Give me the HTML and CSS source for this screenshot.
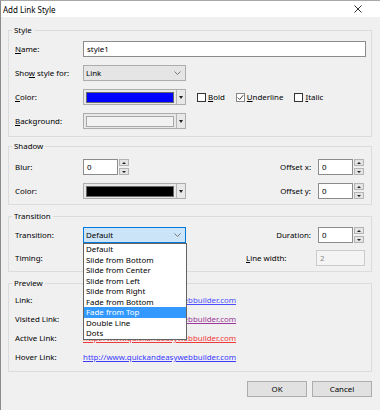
FILE: index.html
```html
<!DOCTYPE html>
<html lang="en">
<head>
    <meta charset="UTF-8">
    <meta name="viewport" content="width=device-width, initial-scale=1.0">
    <title>Add Link Style</title>
    <link rel="stylesheet" href="styles.css">
</head>
<body>

<div class="window">
    <div class="titlebar">
        <span>Add Link Style</span>
        <svg class="close" width="8" height="8" viewBox="0 0 8 8">
            <path d="M0.5 0.5 L7.5 7.5 M7.5 0.5 L0.5 7.5" stroke="#333" stroke-width="1"/>
        </svg>
    </div>

    <div class="content">

        <fieldset class="group group-style">
            <legend>Style</legend>
            <div class="row">
                <span class="lbl"><u>N</u>ame:</span>
                <div class="field name">style1</div>
            </div>
            <div class="row">
                <span class="lbl">Sho<u>w</u> style for:</span>
                <div class="select">
                    <span>Link</span>
                    <svg width="7" height="4" viewBox="0 0 7 4"><path d="M0.5 0.5 L3.5 3.5 L6.5 0.5" fill="none" stroke="#777"/></svg>
                </div>
            </div>
            <div class="row">
                <span class="lbl"><u>C</u>olor:</span>
                <div class="colorbtn">
                    <div class="swatch blue"></div>
                    <div class="sep"></div>
                    <div class="arrow"></div>
                </div>
                <div class="check">
                    <div class="box"></div>
                    <span><u>B</u>old</span>
                </div>
                <div class="check">
                    <div class="box checked">
                        <svg width="7" height="7" viewBox="0 0 7 7"><path d="M0.8 3.6 L2.7 5.5 L6.3 1.2" fill="none" stroke="#444" stroke-width="1"/></svg>
                    </div>
                    <span><u>U</u>nderline</span>
                </div>
                <div class="check">
                    <div class="box"></div>
                    <span><u>I</u>talic</span>
                </div>
            </div>
            <div class="row">
                <span class="lbl"><u>B</u>ackground:</span>
                <div class="colorbtn">
                    <div class="swatch light"></div>
                    <div class="sep"></div>
                    <div class="arrow"></div>
                </div>
            </div>
        </fieldset>

        <fieldset class="group group-shadow">
            <legend>Shadow</legend>
            <div class="row">
                <span class="lbl">Blur:</span>
                <div class="spin">
                    <div class="field spin-input">0</div>
                    <div class="spin-btns"><div class="sbtn up"></div><div class="sbtn down"></div></div>
                </div>
                <div class="right">
                    <span class="rlbl">Offset x:</span>
                    <div class="spin">
                        <div class="field spin-input">0</div>
                        <div class="spin-btns"><div class="sbtn up"></div><div class="sbtn down"></div></div>
                    </div>
                </div>
            </div>
            <div class="row">
                <span class="lbl">Color:</span>
                <div class="colorbtn">
                    <div class="swatch black"></div>
                    <div class="sep"></div>
                    <div class="arrow"></div>
                </div>
                <div class="right">
                    <span class="rlbl">Offset y:</span>
                    <div class="spin">
                        <div class="field spin-input">0</div>
                        <div class="spin-btns"><div class="sbtn up"></div><div class="sbtn down"></div></div>
                    </div>
                </div>
            </div>
        </fieldset>

        <fieldset class="group group-transition">
            <legend>Transition</legend>
            <div class="row">
                <span class="lbl">Transition:</span>
                <div class="select focused">
                    <span>Default</span>
                    <svg width="7" height="4" viewBox="0 0 7 4"><path d="M0.5 0.5 L3.5 3.5 L6.5 0.5" fill="none" stroke="#777"/></svg>
                    <ul class="dropdown">
                        <li>Default</li>
                        <li>Slide from Bottom</li>
                        <li>Slide from Center</li>
                        <li>Slide from Left</li>
                        <li>Slide from Right</li>
                        <li>Fade from Bottom</li>
                        <li class="selected">Fade from Top</li>
                        <li>Double Line</li>
                        <li>Dots</li>
                    </ul>
                </div>
                <div class="right">
                    <span class="rlbl">Duration:</span>
                    <div class="spin">
                        <div class="field spin-input">0</div>
                        <div class="spin-btns"><div class="sbtn up"></div><div class="sbtn down"></div></div>
                    </div>
                </div>
            </div>
            <div class="row">
                <span class="lbl">Timing:</span>
                <div class="select"></div>
                <div class="right">
                    <span class="lw-lbl"><u>L</u>ine width:</span>
                    <div class="field disabled">2</div>
                </div>
            </div>
        </fieldset>

        <fieldset class="group group-preview">
            <legend>Preview</legend>
            <div class="prow">
                <span class="lbl">Link:</span>
                <a class="plink link">http://www.quickandeasywebbuilder.com</a>
            </div>
            <div class="prow">
                <span class="lbl">Visited Link:</span>
                <a class="plink visited">http://www.quickandeasywebbuilder.com</a>
            </div>
            <div class="prow">
                <span class="lbl">Active Link:</span>
                <a class="plink active">http://www.quickandeasywebbuilder.com</a>
            </div>
            <div class="prow">
                <span class="lbl">Hover Link:</span>
                <a class="plink hover">http://www.quickandeasywebbuilder.com</a>
            </div>
        </fieldset>

        <div class="buttons">
            <button class="btn">OK</button>
            <button class="btn">Cancel</button>
        </div>

    </div>
</div>

</body>
</html>
```

FILE: styles.css
```css
* {
    box-sizing: border-box;
}

body {
    margin: 0;
    font-family: "Noto Sans", "Open Sans", sans-serif;
    font-size: 7.9px;
    color: #000;
    background: #f0f0f0;
}

.window {
    width: 380px;
    height: 410px;
    background: #f0f0f0;
    border-top: 1px solid #a8a8a8;
    border-left: 1px solid #8a8a8a;
}

.titlebar {
    height: 16px;
    background: #fff;
    display: flex;
    align-items: center;
    justify-content: space-between;
    padding: 0 18px 0 2px;
    font-size: 8px;
}

.content {
    padding: 7px 8px 0 7px;
}

.group {
    margin: 0;
    min-width: 0;
    border: 1px solid #dcdcdc;
    padding: 5px 6px 7px 6px;
}

.group legend {
    padding: 0 2px;
    margin-left: -3px;
    height: 12px;
    line-height: 12px;
}

.group-shadow {
    margin-top: 3px;
    padding-top: 7px;
    padding-bottom: 5px;
}

.group-transition {
    margin-top: 5px;
    padding-bottom: 5px;
}

.group-transition .row + .row {
    margin-top: 7px;
}

.group-preview {
    margin-top: 5px;
    padding-bottom: 8px;
}

.row {
    display: flex;
    align-items: center;
    height: 16px;
}

.row + .row {
    margin-top: 8px;
}

.lbl {
    width: 68px;
    flex: none;
    white-space: nowrap;
}

.field {
    height: 16px;
    flex: none;
    border: 1px solid #8c8c8c;
    background: #fff;
    padding: 0 3px;
    display: flex;
    align-items: center;
}

.name {
    width: 283px;
}

.select {
    position: relative;
    width: 103px;
    height: 16px;
    flex: none;
    border: 1px solid #adadad;
    background: #e5e5e5;
    display: flex;
    align-items: center;
    justify-content: space-between;
    padding: 0 4px 0 2px;
}

.select.focused {
    background: #cce4f7;
    border-color: #0078d7;
}

.colorbtn {
    width: 103px;
    height: 16px;
    flex: none;
    border: 1px solid #adadad;
    background: #e8e8e8;
    display: flex;
    align-items: center;
    padding: 0 2px;
}

.swatch {
    width: 89px;
    height: 11px;
    border: 1px solid #6a6a6a;
}

.swatch.blue {
    background: #0000ff;
}

.swatch.black {
    background: #000;
}

.swatch.light {
    background: #f2f2f2;
    border-color: #a8a8a8;
}

.sep {
    width: 1px;
    height: 14px;
    margin-left: 2px;
    background: #b4b4b4;
}

.arrow {
    margin-left: 2px;
    width: 0;
    height: 0;
    border-left: 2px solid transparent;
    border-right: 2px solid transparent;
    border-top: 3px solid #222;
}

.check {
    display: flex;
    align-items: center;
    margin-left: 11px;
}

.check span {
    margin-left: 2px;
}

.box {
    width: 9px;
    height: 9px;
    border: 1px solid #333;
    background: #fff;
    display: flex;
    align-items: center;
    justify-content: center;
}

.box.checked {
    border-color: #888;
}

.spin {
    display: flex;
    align-items: center;
    flex: none;
}

.spin-input {
    width: 35px;
}

.spin-btns {
    display: flex;
    flex-direction: column;
    gap: 2px;
    margin-left: 1px;
}

.sbtn {
    width: 10px;
    height: 7px;
    border: 1px solid #b4b4b4;
    background: #e4e4e4;
    display: flex;
    align-items: center;
    justify-content: center;
}

.sbtn::after {
    content: "";
    width: 0;
    height: 0;
    border-left: 2px solid transparent;
    border-right: 2px solid transparent;
}

.sbtn.up::after {
    border-bottom: 2px solid #222;
}

.sbtn.down::after {
    border-top: 2px solid #222;
}

.right {
    margin-left: auto;
    margin-right: 1px;
    display: flex;
    align-items: center;
}

.rlbl {
    margin-right: 7px;
}

.lw-lbl {
    width: 70px;
}

.field.disabled {
    width: 49px;
    margin-right: -1px;
    background: #f4f4f4;
    border-color: #cccccc;
    color: #8a8a8a;
}

.dropdown {
    position: absolute;
    top: 15px;
    left: -1px;
    width: 104px;
    margin: 0;
    padding: 0;
    list-style: none;
    background: #fff;
    border: 1px solid #646464;
    z-index: 5;
}

.dropdown li {
    height: 10.5px;
    line-height: 10.5px;
    padding-left: 2px;
    white-space: nowrap;
}

.dropdown li.selected {
    background: #3399ff;
    color: #fff;
}

.prow {
    display: flex;
    align-items: center;
    height: 12px;
}

.prow + .prow {
    margin-top: 7px;
}

.plink {
    text-decoration: underline;
}

.plink.link {
    color: #4d4dff;
}

.plink.visited {
    color: #9a3a9a;
}

.plink.active {
    color: #f03a3a;
}

.plink.hover {
    color: #3a3aff;
}

.buttons {
    display: flex;
    justify-content: flex-end;
    gap: 5px;
    margin-top: 9px;
}

.btn {
    width: 60px;
    height: 16px;
    padding: 0;
    border: 1px solid #adadad;
    background: #e1e1e1;
    font-family: inherit;
    font-size: 7.9px;
    color: #000;
}
```
